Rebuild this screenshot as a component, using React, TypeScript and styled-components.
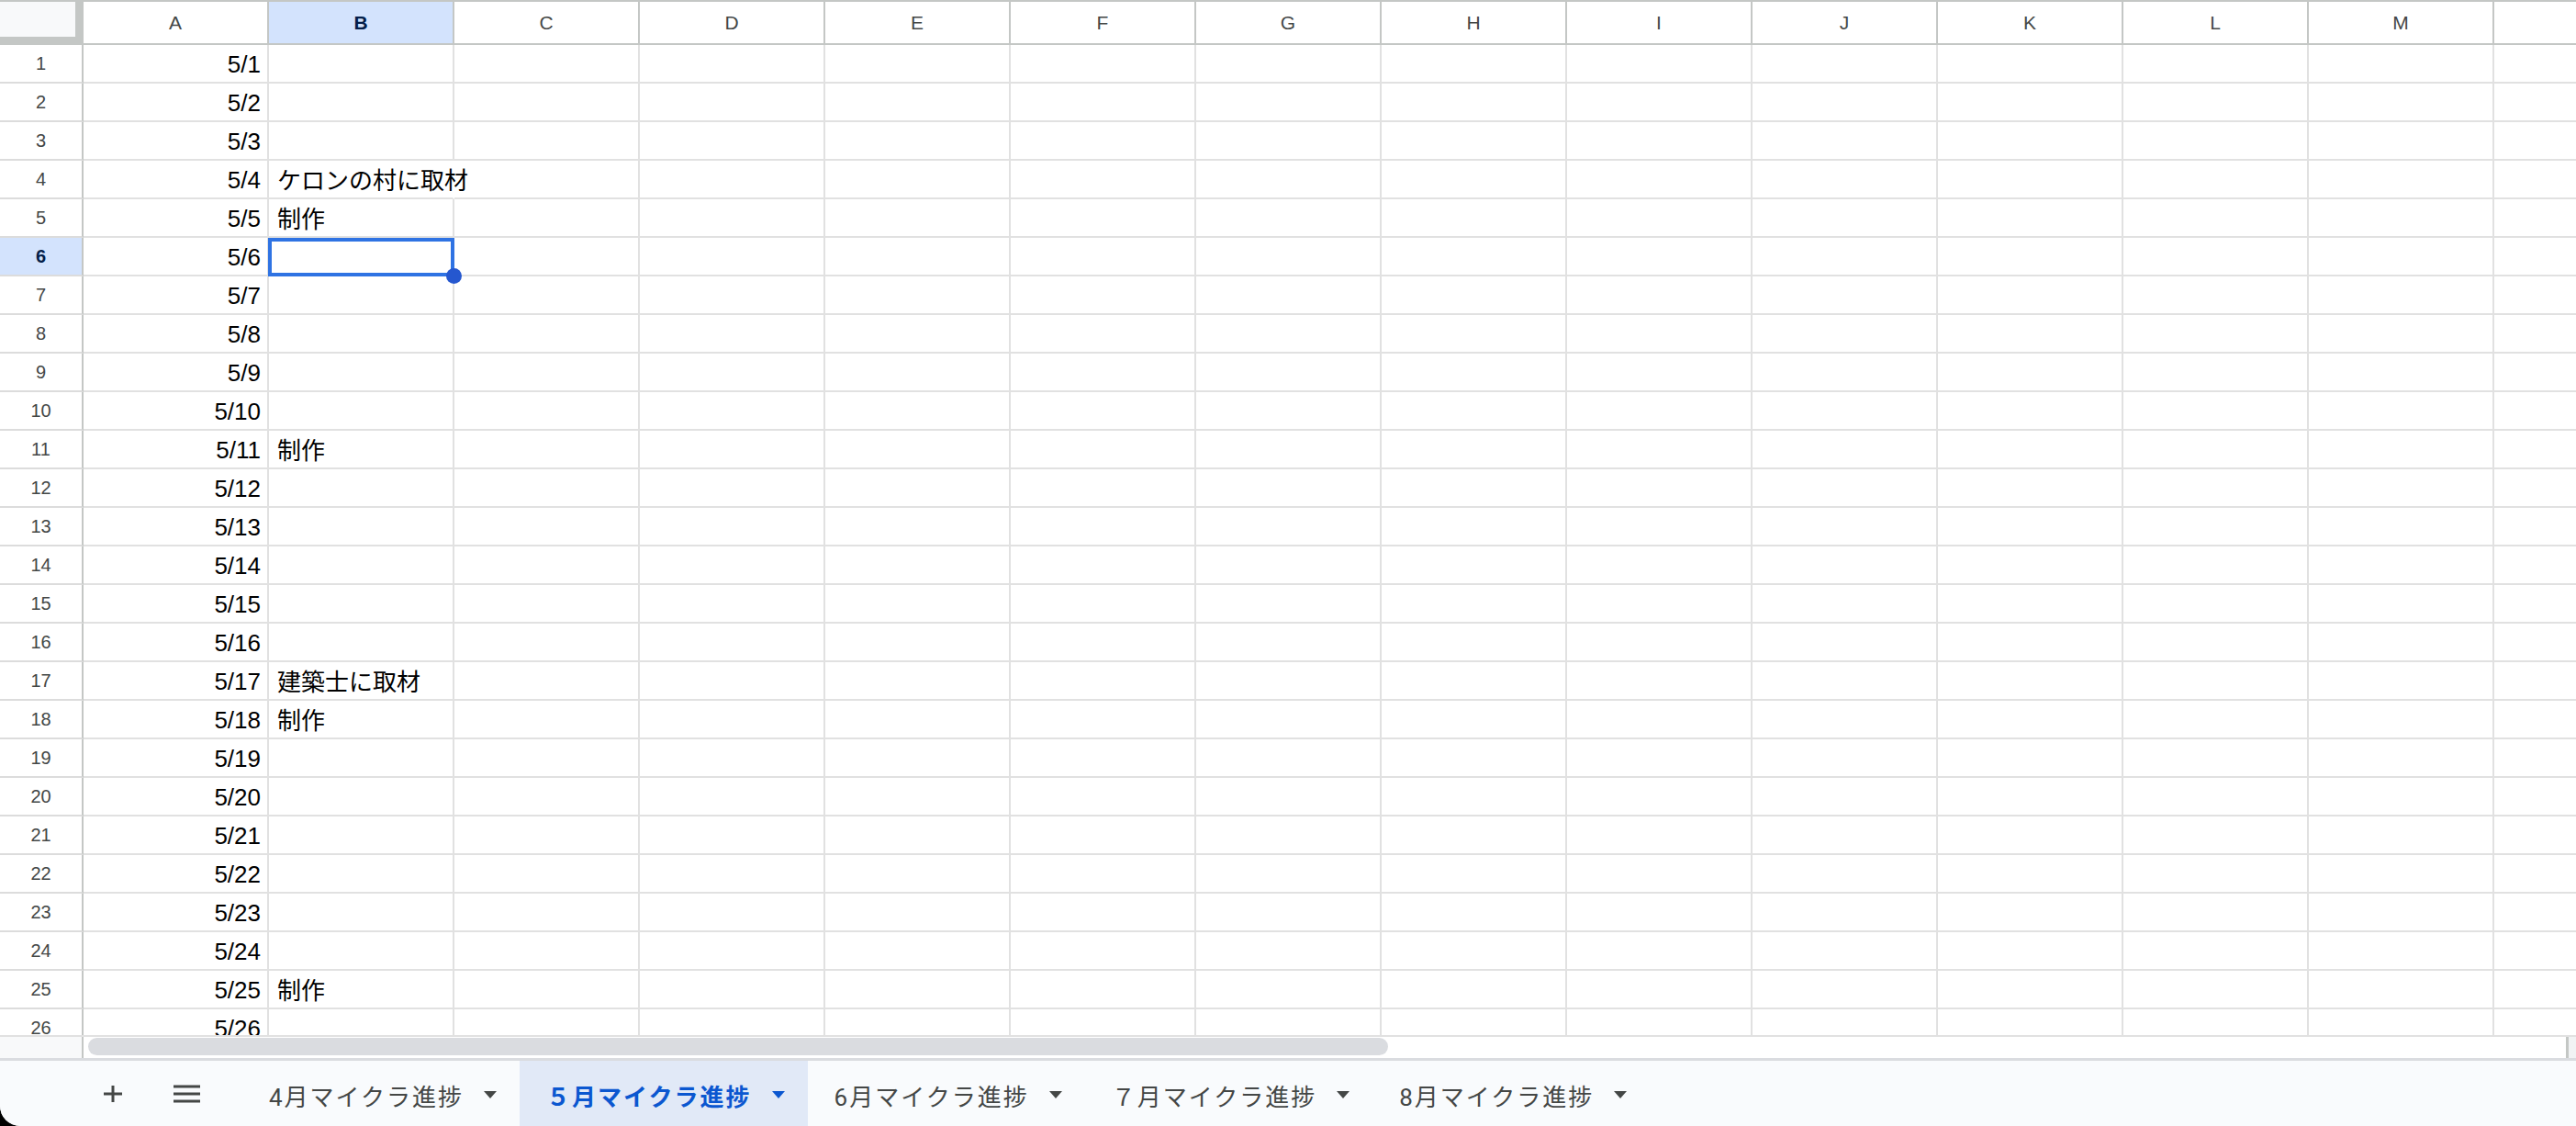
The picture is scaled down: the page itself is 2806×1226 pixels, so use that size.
import React, { ReactElement } from 'react';
import styled, { createGlobalStyle } from 'styled-components';

const COLUMNS = ['A', 'B', 'C', 'D', 'E', 'F', 'G', 'H', 'I', 'J', 'K', 'L', 'M', ''];
const ROW_COUNT = 26;
const ACTIVE_COL = 'B';
const ACTIVE_ROW = 6;

const NOTES: Record<number, string> = {
  4: 'ケロンの村に取材',
  5: '制作',
  11: '制作',
  17: '建築士に取材',
  18: '制作',
  25: '制作',
};

const SHEETS = ['4月マイクラ進捗', '５月マイクラ進捗', '6月マイクラ進捗', '７月マイクラ進捗', '8月マイクラ進捗'];
const ACTIVE_SHEET = 1;

function App(): ReactElement {
  const rows = Array.from({ length: ROW_COUNT }, (_, i) => i + 1);

  return (
    <Window>
      <GlobalStyle />
      <SheetArea>
        <Grid>
          <Corner>
            <CornerInner />
          </Corner>
          {COLUMNS.map((c, i) => (
            <ColHeader key={i} $active={c === ACTIVE_COL}>
              {c}
            </ColHeader>
          ))}
          {rows.map((r) => (
            <React.Fragment key={r}>
              <RowHeader $active={r === ACTIVE_ROW}>{r}</RowHeader>
              {COLUMNS.map((c, i) => {
                const selected = c === ACTIVE_COL && r === ACTIVE_ROW;
                let text = '';
                if (c === 'A') text = `5/${r}`;
                if (c === 'B') text = NOTES[r] ?? '';
                const spills = c === 'B' && text.length > 7;
                return (
                  <Cell
                    key={i}
                    $right={c === 'A'}
                    $cjk={c === 'B'}
                    $spill={spills}
                    $selected={selected}
                  >
                    {text}
                    {selected && (
                      <Selection>
                        <FillHandle />
                      </Selection>
                    )}
                  </Cell>
                );
              })}
            </React.Fragment>
          ))}
        </Grid>
      </SheetArea>

      <ScrollRow>
        <ScrollCorner />
        <Track>
          <Thumb />
        </Track>
        <ScrollEnd />
      </ScrollRow>

      <TabBar>
        <IconButton aria-label="シートを追加">
          <svg width="22" height="20" viewBox="0 0 22 20">
            <path d="M11 1v18M1 10h20" stroke="#444746" strokeWidth="3" fill="none" />
          </svg>
        </IconButton>
        <IconButton aria-label="すべてのシート">
          <svg width="29" height="20" viewBox="0 0 29 20">
            <path d="M0 2h29M0 10h29M0 18h29" stroke="#444746" strokeWidth="3.2" fill="none" />
          </svg>
        </IconButton>
        <Tabs>
          {SHEETS.map((name, i) => (
            <Tab key={name} $active={i === ACTIVE_SHEET}>
              <TabLabel>{name}</TabLabel>
              <Caret />
            </Tab>
          ))}
        </Tabs>
      </TabBar>
    </Window>
  );
}

const GlobalStyle = createGlobalStyle`
  html, body {
    margin: 0;
    padding: 0;
    background: #000000;
  }
  body {
    font-family: "Liberation Sans", Arial, "Noto Sans CJK JP", sans-serif;
  }
  * {
    box-sizing: border-box;
  }
`;

const Window = styled.div`
  width: 2806px;
  height: 1226px;
  display: flex;
  flex-direction: column;
  background: #ffffff;
  border-bottom-left-radius: 22px;
  overflow: hidden;
`;

const SheetArea = styled.div`
  flex: 1 1 auto;
  min-height: 0;
  overflow: hidden;
`;

const Grid = styled.div`
  display: grid;
  grid-template-columns: 91px repeat(14, 202px);
  grid-template-rows: 49px;
  grid-auto-rows: 42px;
`;

const Corner = styled.div`
  background: #c4c7c5;
  padding: 2px 9px 9px 0;
`;

const CornerInner = styled.div`
  width: 100%;
  height: 100%;
  background: #f8f9fa;
`;

const ColHeader = styled.div<{ $active: boolean }>`
  display: flex;
  align-items: center;
  justify-content: center;
  border-top: 2px solid #c4c7c5;
  border-bottom: 2px solid #c4c7c5;
  border-right: 2px solid #c4c7c5;
  background: ${(p) => (p.$active ? '#d3e3fd' : '#ffffff')};
  color: ${(p) => (p.$active ? '#041e49' : '#444746')};
  font-weight: ${(p) => (p.$active ? 700 : 400)};
  font-size: 21px;
`;

const RowHeader = styled.div<{ $active: boolean }>`
  display: flex;
  align-items: center;
  justify-content: center;
  border-right: 2px solid #c4c7c5;
  border-bottom: 2px solid #dcdcdc;
  background: ${(p) => (p.$active ? '#d3e3fd' : '#ffffff')};
  color: ${(p) => (p.$active ? '#041e49' : '#444746')};
  font-weight: ${(p) => (p.$active ? 700 : 400)};
  font-size: 20px;
`;

const Cell = styled.div<{ $right: boolean; $cjk: boolean; $spill: boolean; $selected: boolean }>`
  position: ${(p) => (p.$selected ? 'relative' : 'static')};
  display: flex;
  align-items: center;
  justify-content: ${(p) => (p.$right ? 'flex-end' : 'flex-start')};
  padding: ${(p) => (p.$cjk ? '0 7px 2px 9px' : '3px 7px 0 9px')};
  border-right: 2px solid ${(p) => (p.$spill ? 'transparent' : '#e1e1e1')};
  border-bottom: 2px solid #e1e1e1;
  font-size: 26px;
  color: #000000;
  white-space: nowrap;
  overflow: visible;
`;

const Selection = styled.div`
  position: absolute;
  top: 0;
  left: -1px;
  right: -2px;
  bottom: -2px;
  border: 4px solid #2f73e3;
  pointer-events: none;
`;

const FillHandle = styled.div`
  position: absolute;
  right: -12px;
  bottom: -12px;
  width: 17px;
  height: 17px;
  border-radius: 50%;
  background: #2557cf;
`;

const ScrollRow = styled.div`
  flex: 0 0 25px;
  display: flex;
  border-top: 2px solid #e1e1e1;
  background: #ffffff;
`;

const ScrollCorner = styled.div`
  width: 91px;
  background: #f8f9fa;
  border-right: 2px solid #c4c7c5;
`;

const Track = styled.div`
  flex: 1;
  padding: 1px 0 0 5px;
`;

const Thumb = styled.div`
  width: 1416px;
  height: 19px;
  border-radius: 10px;
  background: #dadce0;
`;

const ScrollEnd = styled.div`
  width: 11px;
  border-left: 3px solid #c4c7c5;
  background: #f1f3f4;
`;

const TabBar = styled.div`
  flex: 0 0 74px;
  display: flex;
  align-items: stretch;
  padding-left: 95px;
  border-top: 3px solid #dadce0;
  background: #f9fbfd;
`;

const IconButton = styled.button`
  width: 56px;
  margin-right: 24px;
  padding: 0;
  border: none;
  background: transparent;
  display: flex;
  align-items: center;
  justify-content: center;

  &:last-of-type {
    margin-right: 0;
  }
`;

const Tabs = styled.div`
  display: flex;
  margin-left: 33px;
`;

const Tab = styled.div<{ $active: boolean }>`
  display: flex;
  align-items: center;
  gap: 22px;
  padding: 3px 25px 0 29px;
  background: ${(p) => (p.$active ? '#e1e9f7' : 'transparent')};
  color: ${(p) => (p.$active ? '#0b57d0' : '#444746')};
  font-family: Roboto, "Noto Sans CJK JP", sans-serif;
  font-weight: ${(p) => (p.$active ? 700 : 400)};
  font-size: 26px;
`;

const TabLabel = styled.span`
  letter-spacing: 2px;
  white-space: nowrap;
`;

const Caret = styled.span`
  width: 0;
  height: 0;
  border-left: 7px solid transparent;
  border-right: 7px solid transparent;
  border-top: 8px solid currentColor;
`;

export default App;
